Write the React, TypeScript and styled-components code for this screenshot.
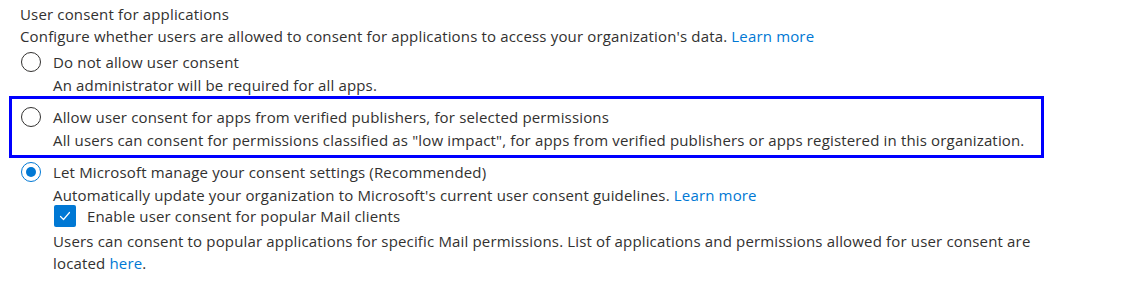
import styled, { createGlobalStyle } from 'styled-components';

const GlobalStyle = createGlobalStyle`
  body {
    margin: 0;
    background: #ffffff;
    font-family: 'Open Sans', 'Noto Sans', sans-serif;
    font-size: 15px;
    letter-spacing: 0.16px;
    color: #323130;
  }
`;

const Page = styled.div`
  padding: 3px 0 0 20px;
  line-height: 22px;
`;

const Title = styled.div``;

const Description = styled.div``;

const Link = styled.a`
  color: #0078d4;
  text-decoration: none;
`;

const Options = styled.div`
  display: flex;
  flex-direction: column;
`;

const Option = styled.div<{ $highlighted?: boolean; $top: number }>`
  display: grid;
  grid-template-columns: 32px 1fr;
  margin-top: ${(p) => p.$top}px;
  margin-left: ${(p) => (p.$highlighted ? -11 : 1)}px;
  ${(p) =>
    p.$highlighted &&
    `
    width: 1035px;
    box-sizing: border-box;
    border: 3px solid #0000ff;
    padding: 7px 0 4px 9px;
  `}
`;

const RadioCell = styled.div`
  height: 22px;
  display: flex;
  align-items: center;
`;

const Radio = styled.span<{ $checked?: boolean }>`
  width: 20px;
  height: 20px;
  box-sizing: border-box;
  border-radius: 50%;
  border: 1px solid ${(p) => (p.$checked ? '#0078d4' : '#323130')};
  display: flex;
  align-items: center;
  justify-content: center;
  &::after {
    content: '';
    display: ${(p) => (p.$checked ? 'block' : 'none')};
    width: 10px;
    height: 10px;
    border-radius: 50%;
    background: #0078d4;
  }
`;

const Body = styled.div`
  display: flex;
  flex-direction: column;
`;

const Label = styled.div``;

const Sub = styled.div<{ $top?: number }>`
  margin-top: ${(p) => p.$top ?? 1}px;
`;

const CheckRow = styled.div`
  display: flex;
  align-items: center;
  gap: 11px;
  height: 22px;
  margin-top: -1px;
  margin-left: 1px;
`;

const CheckBox = styled.span`
  width: 22px;
  height: 22px;
  border-radius: 2px;
  background: #0078d4;
  display: flex;
  align-items: center;
  justify-content: center;
`;

const Check = () => (
  <svg width="14" height="14" viewBox="0 0 14 14" fill="none">
    <path d="M2.5 7.5 L5.5 10.5 L11.5 3.5" stroke="#fff" strokeWidth="1.2" strokeLinecap="round" strokeLinejoin="round" />
  </svg>
);

export default function App() {
  return (
    <>
      <GlobalStyle />
      <Page>
        <Title>User consent for applications</Title>
        <Description>
          Configure whether users are allowed to consent for applications to access your organization's data.{' '}
          <Link href="#">Learn more</Link>
        </Description>
        <Options>
          <Option $top={4}>
            <RadioCell>
              <Radio />
            </RadioCell>
            <Body>
              <Label>Do not allow user consent</Label>
              <Sub>An administrator will be required for all apps.</Sub>
            </Body>
          </Option>
          <Option $highlighted $top={0}>
            <RadioCell>
              <Radio />
            </RadioCell>
            <Body>
              <Label>Allow user consent for apps from verified publishers, for selected permissions</Label>
              <Sub>
                All users can consent for permissions classified as "low impact", for apps from verified publishers or
                apps registered in this organization.
              </Sub>
            </Body>
          </Option>
          <Option $top={3}>
            <RadioCell>
              <Radio $checked />
            </RadioCell>
            <Body>
              <Label>Let Microsoft manage your consent settings (Recommended)</Label>
              <Sub>
                Automatically update your organization to Microsoft's current user consent guidelines.{' '}
                <Link href="#">Learn more</Link>
              </Sub>
              <CheckRow>
                <CheckBox>
                  <Check />
                </CheckBox>
                <span>Enable user consent for popular Mail clients</span>
              </CheckRow>
              <Sub $top={3}>
                Users can consent to popular applications for specific Mail permissions. List of applications and
                permissions allowed for user consent are
                <br />
                located <Link href="#">here</Link>.
              </Sub>
            </Body>
          </Option>
        </Options>
      </Page>
    </>
  );
}
